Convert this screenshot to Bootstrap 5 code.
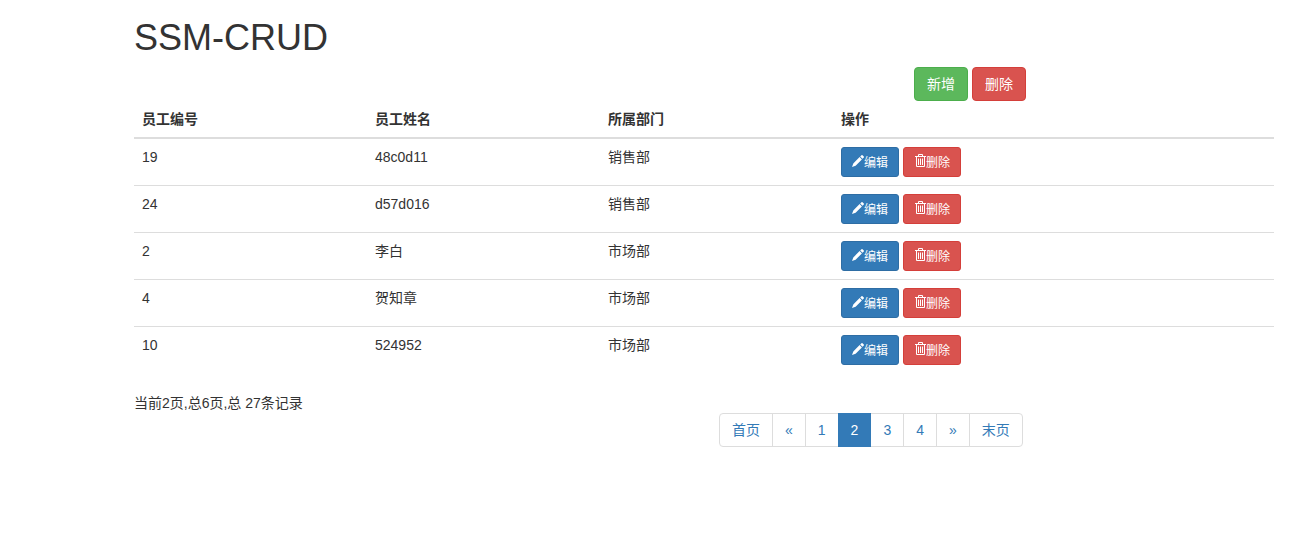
<!DOCTYPE html>
<html lang="zh-CN">
<head>
<meta charset="utf-8">
<meta name="viewport" content="width=device-width, initial-scale=1">
<title>员工列表</title>
<link href="https://cdn.jsdelivr.net/npm/bootstrap@5.3.0/dist/css/bootstrap.min.css" rel="stylesheet">
<style>
body{font:14px/20px "Liberation Sans","Noto Sans CJK SC",sans-serif;color:#333;overflow:hidden}
.page{width:1170px;margin-left:119px;padding:18px 15px 0}
h1{font-size:36px;line-height:40px;margin-bottom:9px;color:#333}
.page .row{--bs-gutter-x:30px}
.btn{--bs-btn-font-size:14px;--bs-btn-line-height:20px;--bs-btn-border-radius:4px;--bs-btn-padding-y:6px;height:34px;display:inline-flex;align-items:center}
.btn-sm{--bs-btn-font-size:12px;--bs-btn-line-height:18px;--bs-btn-border-radius:3px;--bs-btn-padding-y:5px;--bs-btn-padding-x:10px;height:30px;padding-top:6px;padding-bottom:4px}
.btn-sm svg{margin-bottom:4px}
.btn-primary{--bs-btn-bg:#337ab7;--bs-btn-border-color:#2e6da4}
.btn-success{--bs-btn-bg:#5cb85c;--bs-btn-border-color:#4cae4c}
.btn-danger{--bs-btn-bg:#d9534f;--bs-btn-border-color:#d43f3a}
.emps{border-collapse:separate;border-spacing:0;table-layout:fixed;color:#333;margin-bottom:20px;line-height:20px}
.emps>:not(caption)>*>*{padding:8px;color:#333;border-bottom:1px solid #ddd;background:none;box-shadow:none}
.emps>thead>tr>th{border-bottom-width:2px;width:233px}
.emps>thead>tr>th:last-child{width:auto}
.emps>tbody>tr:last-child>td{border-bottom:0}
.pagination{--bs-pagination-font-size:14px;--bs-pagination-padding-y:6px;--bs-pagination-padding-x:12px;--bs-pagination-color:#337ab7;--bs-pagination-border-color:#ddd;--bs-pagination-border-radius:4px;--bs-pagination-active-bg:#337ab7;--bs-pagination-active-border-color:#337ab7;margin-top:20px}
.page-link{line-height:20px;height:34px}
</style>
</head>
<body>
<svg class="d-none">
<symbol id="pencil" viewBox="0 0 12 14"><path fill="#fff" d="M0 13 1.300 9.400 7.600 3.100 9.900 5.400 3.600 11.700ZM8.200 2.500 9.500 1.200Q10 .8 10.500 1.200L11.800 2.500Q12.200 3 11.800 3.500L10.500 4.800Z"/></symbol>
<symbol id="trash" viewBox="0 0 12 14"><path fill="none" stroke="#fff" d="M1 2.500H12M4.500 2V.5H8.500V2M2.500 3V12.500H10.500V3M4.500 4.500V11M6.500 4.500V11M8.500 4.500V11"/></symbol>
</svg>
<main class="page">
<h1 class="fw-normal">SSM-CRUD</h1>
<div class="row"><div class="col-4 offset-8 d-flex gap-1">
<button class="btn btn-success">新增</button><button class="btn btn-danger">删除</button>
</div></div>
<table class="table emps">
<thead><tr><th>员工编号</th><th>员工姓名</th><th>所属部门</th><th>操作</th></tr></thead>
<tbody id="rows"></tbody>
</table>
<div class="row">
<div class="col-6">当前2页,总6页,总 27条记录</div>
<div class="col-6"><ul class="pagination">
<li class="page-item"><a class="page-link" href="#">首页</a></li>
<li class="page-item"><a class="page-link" href="#">«</a></li>
<li class="page-item"><a class="page-link" href="#">1</a></li>
<li class="page-item active"><a class="page-link" href="#">2</a></li>
<li class="page-item"><a class="page-link" href="#">3</a></li>
<li class="page-item"><a class="page-link" href="#">4</a></li>
<li class="page-item"><a class="page-link" href="#">»</a></li>
<li class="page-item"><a class="page-link" href="#">末页</a></li>
</ul></div>
</div>
</main>
<script src="https://cdn.jsdelivr.net/npm/bootstrap@5.3.0/dist/js/bootstrap.bundle.min.js"></script>
<script>
const emps=[["19","48c0d11","销售部"],["24","d57d016","销售部"],["2","李白","市场部"],["4","贺知章","市场部"],["10","524952","市场部"]];
document.getElementById("rows").innerHTML=emps.map(e=>`<tr>${e.map(v=>`<td>${v}</td>`).join("")}<td><div class="d-flex gap-1"><button class="btn btn-primary btn-sm"><svg width="12" height="14"><use href="#pencil"/></svg>编辑</button><button class="btn btn-danger btn-sm"><svg width="12" height="14"><use href="#trash"/></svg>删除</button></div></td></tr>`).join("");
</script>
</body>
</html>
